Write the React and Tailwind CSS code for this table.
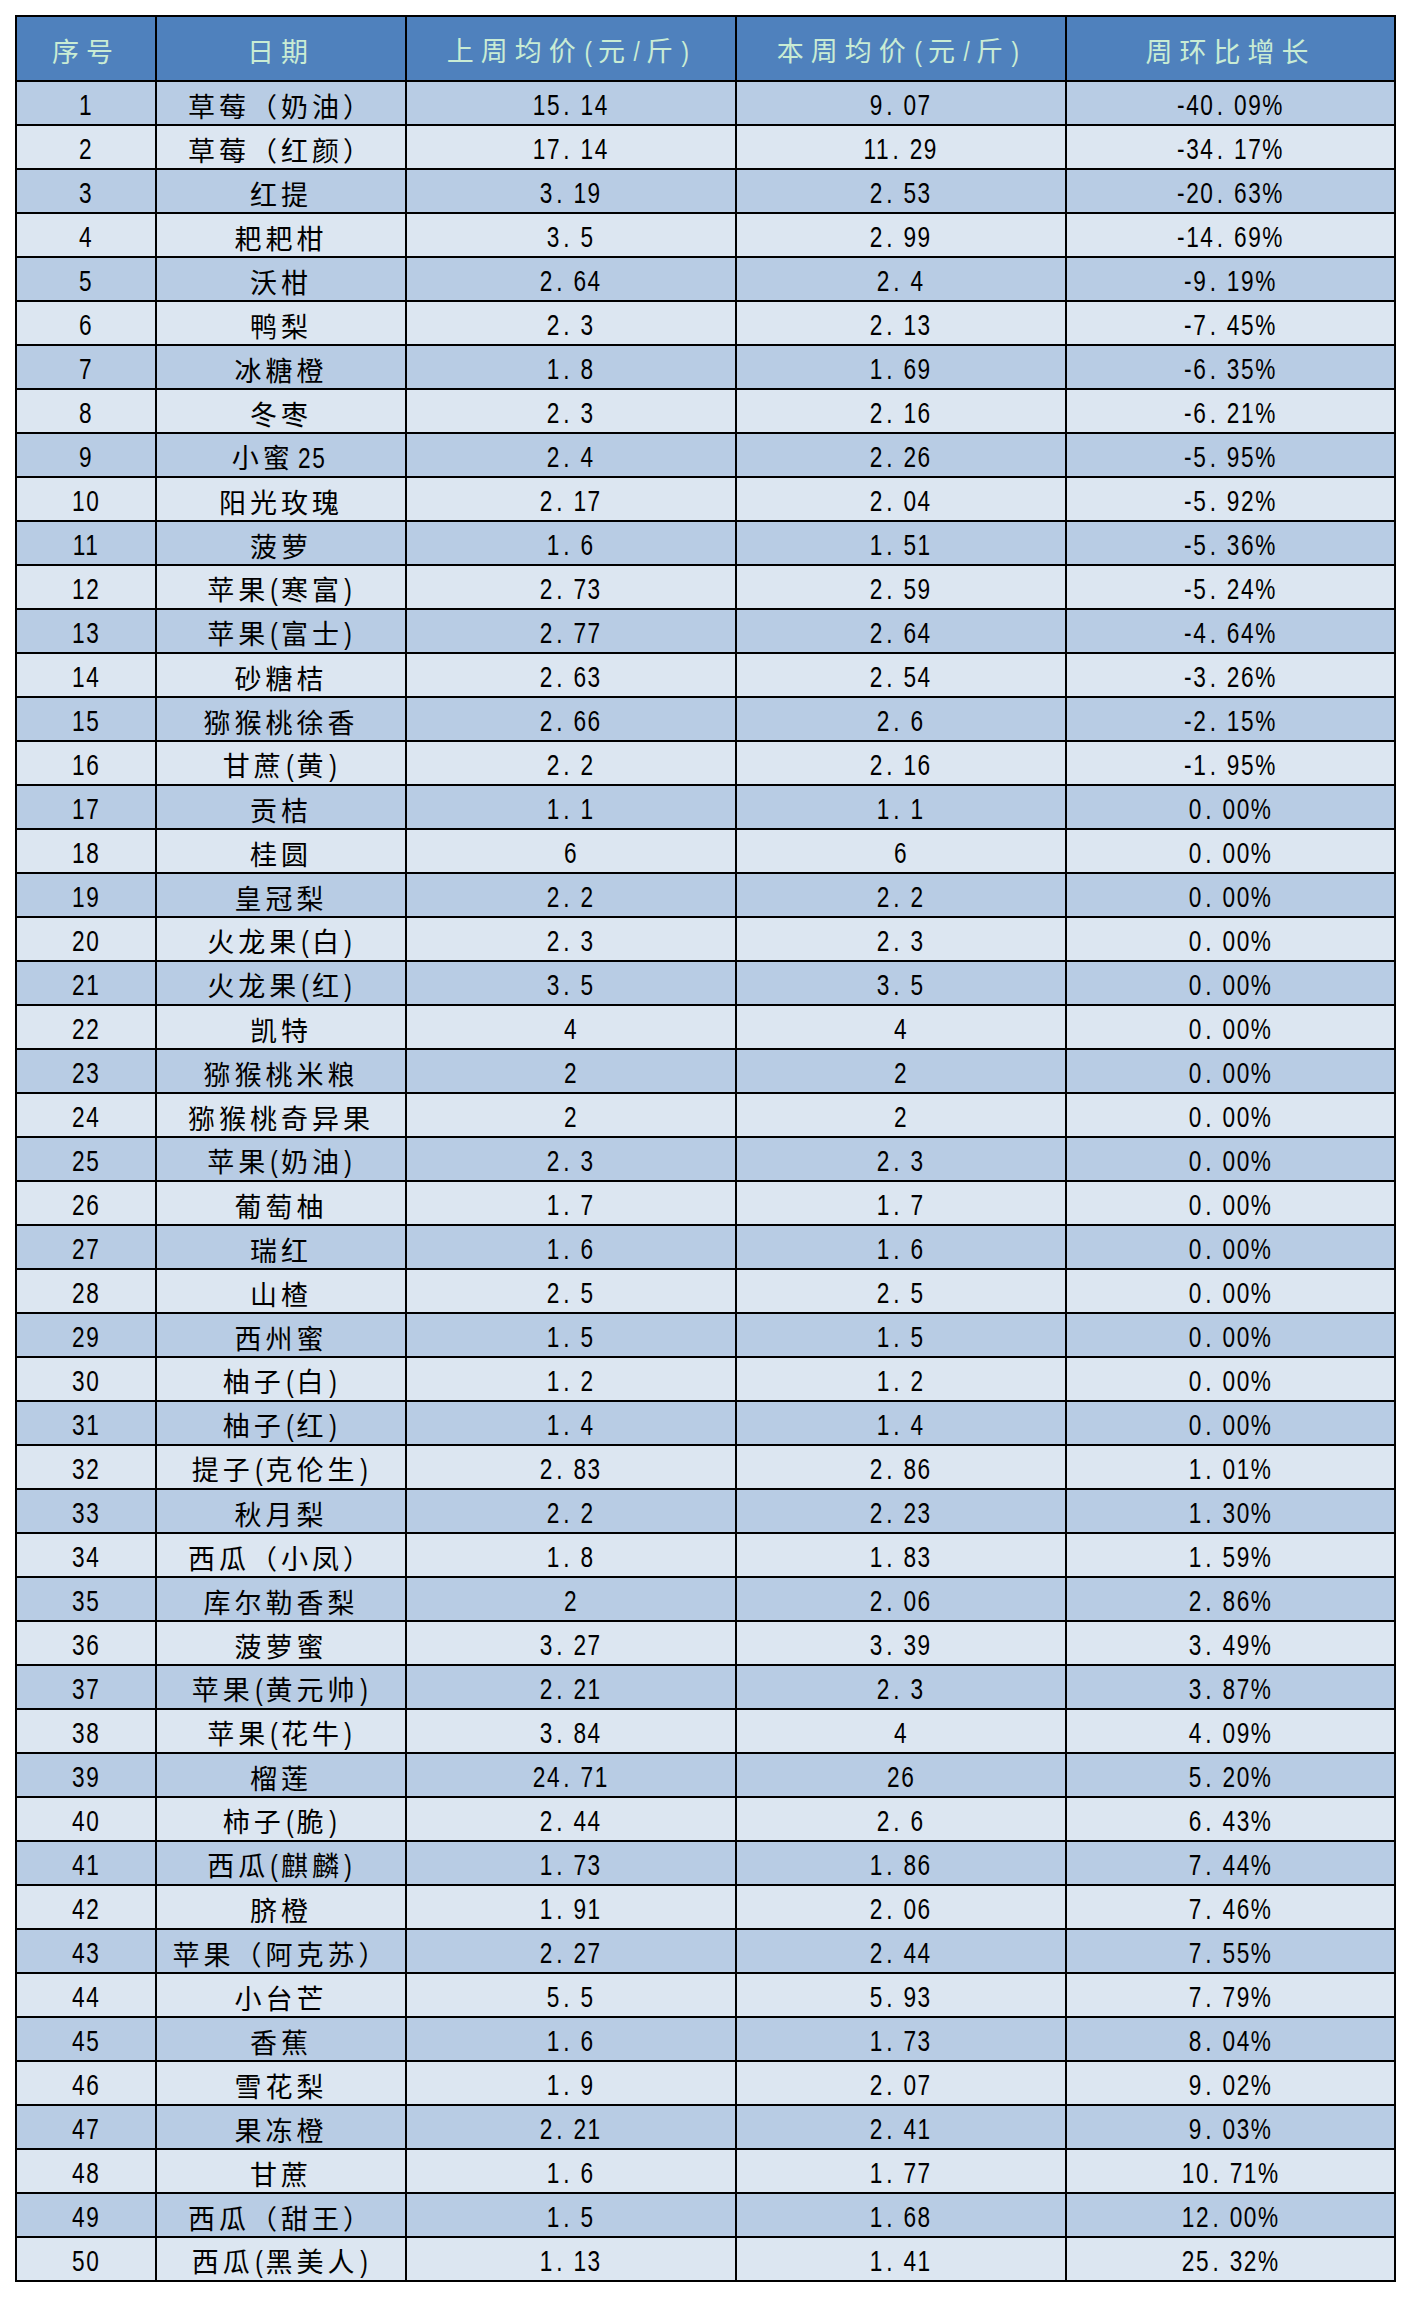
import React from 'react';

// 水果周均价对比表（50 个品种）
const rows = [
  ['草莓（奶油）', '15.14', '9.07', '-40.09%'],
  ['草莓（红颜）', '17.14', '11.29', '-34.17%'],
  ['红提', '3.19', '2.53', '-20.63%'],
  ['耙耙柑', '3.5', '2.99', '-14.69%'],
  ['沃柑', '2.64', '2.4', '-9.19%'],
  ['鸭梨', '2.3', '2.13', '-7.45%'],
  ['冰糖橙', '1.8', '1.69', '-6.35%'],
  ['冬枣', '2.3', '2.16', '-6.21%'],
  ['小蜜25', '2.4', '2.26', '-5.95%'],
  ['阳光玫瑰', '2.17', '2.04', '-5.92%'],
  ['菠萝', '1.6', '1.51', '-5.36%'],
  ['苹果(寒富)', '2.73', '2.59', '-5.24%'],
  ['苹果(富士)', '2.77', '2.64', '-4.64%'],
  ['砂糖桔', '2.63', '2.54', '-3.26%'],
  ['猕猴桃徐香', '2.66', '2.6', '-2.15%'],
  ['甘蔗(黄)', '2.2', '2.16', '-1.95%'],
  ['贡桔', '1.1', '1.1', '0.00%'],
  ['桂圆', '6', '6', '0.00%'],
  ['皇冠梨', '2.2', '2.2', '0.00%'],
  ['火龙果(白)', '2.3', '2.3', '0.00%'],
  ['火龙果(红)', '3.5', '3.5', '0.00%'],
  ['凯特', '4', '4', '0.00%'],
  ['猕猴桃米粮', '2', '2', '0.00%'],
  ['猕猴桃奇异果', '2', '2', '0.00%'],
  ['苹果(奶油)', '2.3', '2.3', '0.00%'],
  ['葡萄柚', '1.7', '1.7', '0.00%'],
  ['瑞红', '1.6', '1.6', '0.00%'],
  ['山楂', '2.5', '2.5', '0.00%'],
  ['西州蜜', '1.5', '1.5', '0.00%'],
  ['柚子(白)', '1.2', '1.2', '0.00%'],
  ['柚子(红)', '1.4', '1.4', '0.00%'],
  ['提子(克伦生)', '2.83', '2.86', '1.01%'],
  ['秋月梨', '2.2', '2.23', '1.30%'],
  ['西瓜（小凤）', '1.8', '1.83', '1.59%'],
  ['库尔勒香梨', '2', '2.06', '2.86%'],
  ['菠萝蜜', '3.27', '3.39', '3.49%'],
  ['苹果(黄元帅)', '2.21', '2.3', '3.87%'],
  ['苹果(花牛)', '3.84', '4', '4.09%'],
  ['榴莲', '24.71', '26', '5.20%'],
  ['柿子(脆)', '2.44', '2.6', '6.43%'],
  ['西瓜(麒麟)', '1.73', '1.86', '7.44%'],
  ['脐橙', '1.91', '2.06', '7.46%'],
  ['苹果（阿克苏）', '2.27', '2.44', '7.55%'],
  ['小台芒', '5.5', '5.93', '7.79%'],
  ['香蕉', '1.6', '1.73', '8.04%'],
  ['雪花梨', '1.9', '2.07', '9.02%'],
  ['果冻橙', '2.21', '2.41', '9.03%'],
  ['甘蔗', '1.6', '1.77', '10.71%'],
  ['西瓜（甜王）', '1.5', '1.68', '12.00%'],
  ['西瓜(黑美人)', '1.13', '1.41', '25.32%'],
];

const headers = ['序号', '日期', '上周均价(元/斤)', '本周均价(元/斤)', '周环比增长'];

// 中文用黑体，数字和半角符号用压窄的无衬线体，小数点后面留空
function Mixed({ text, head }) {
  const parts = text.split(/([\u4e00-\u9fff\uff08\uff09]+)/).filter(Boolean);
  return (
    <span className="whitespace-nowrap">
      {parts.map((p, i) =>
        /[\u4e00-\u9fff\uff08\uff09]/.test(p) ? (
          <span
            key={i}
            className={
              head
                ? "font-['Noto_Sans_CJK_SC',sans-serif] text-[27px] tracking-[7px]"
                : "font-['Noto_Sans_CJK_SC',sans-serif] text-[27px] tracking-[4px]"
            }
          >
            {p}
          </span>
        ) : (
          <span
            key={i}
            className={
              head
                ? "inline-block scale-x-[0.8] font-['Liberation_Sans',sans-serif] text-[28px] tracking-[6px]"
                : "inline-block scale-x-[0.78] font-['Liberation_Sans',sans-serif] text-[29px] tracking-[2px]"
            }
          >
            {p.split('.').map((s, j) => (
              <React.Fragment key={j}>
                {j > 0 && <span className="ml-[3px] mr-[12px]">.</span>}
                {s}
              </React.Fragment>
            ))}
          </span>
        )
      )}
    </span>
  );
}

export default function App() {
  return (
    <div className="min-h-screen bg-white pt-[15px] pl-[15px]">
      <div className="grid w-[1381px] grid-cols-[138px_248px_328px_328px_327px] gap-[2px] bg-black p-[2px]">
        {headers.map((h) => (
          <div
            key={h}
            className="flex h-[63px] items-center justify-center bg-[#4f81bd] pt-[4px] text-[#c9ecd4] leading-none"
          >
            <Mixed text={h} head />
          </div>
        ))}
        {rows.map((r, i) => {
          const bg = i % 2 === 0 ? 'bg-[#b8cce4]' : 'bg-[#dce6f1]';
          return [String(i + 1), ...r].map((c, k) => (
            <div
              key={`${i}-${k}`}
              className={`flex h-[42px] items-center justify-center pt-[5px] leading-none text-black ${bg}`}
            >
              <Mixed text={c} />
            </div>
          ));
        })}
      </div>
    </div>
  );
}
